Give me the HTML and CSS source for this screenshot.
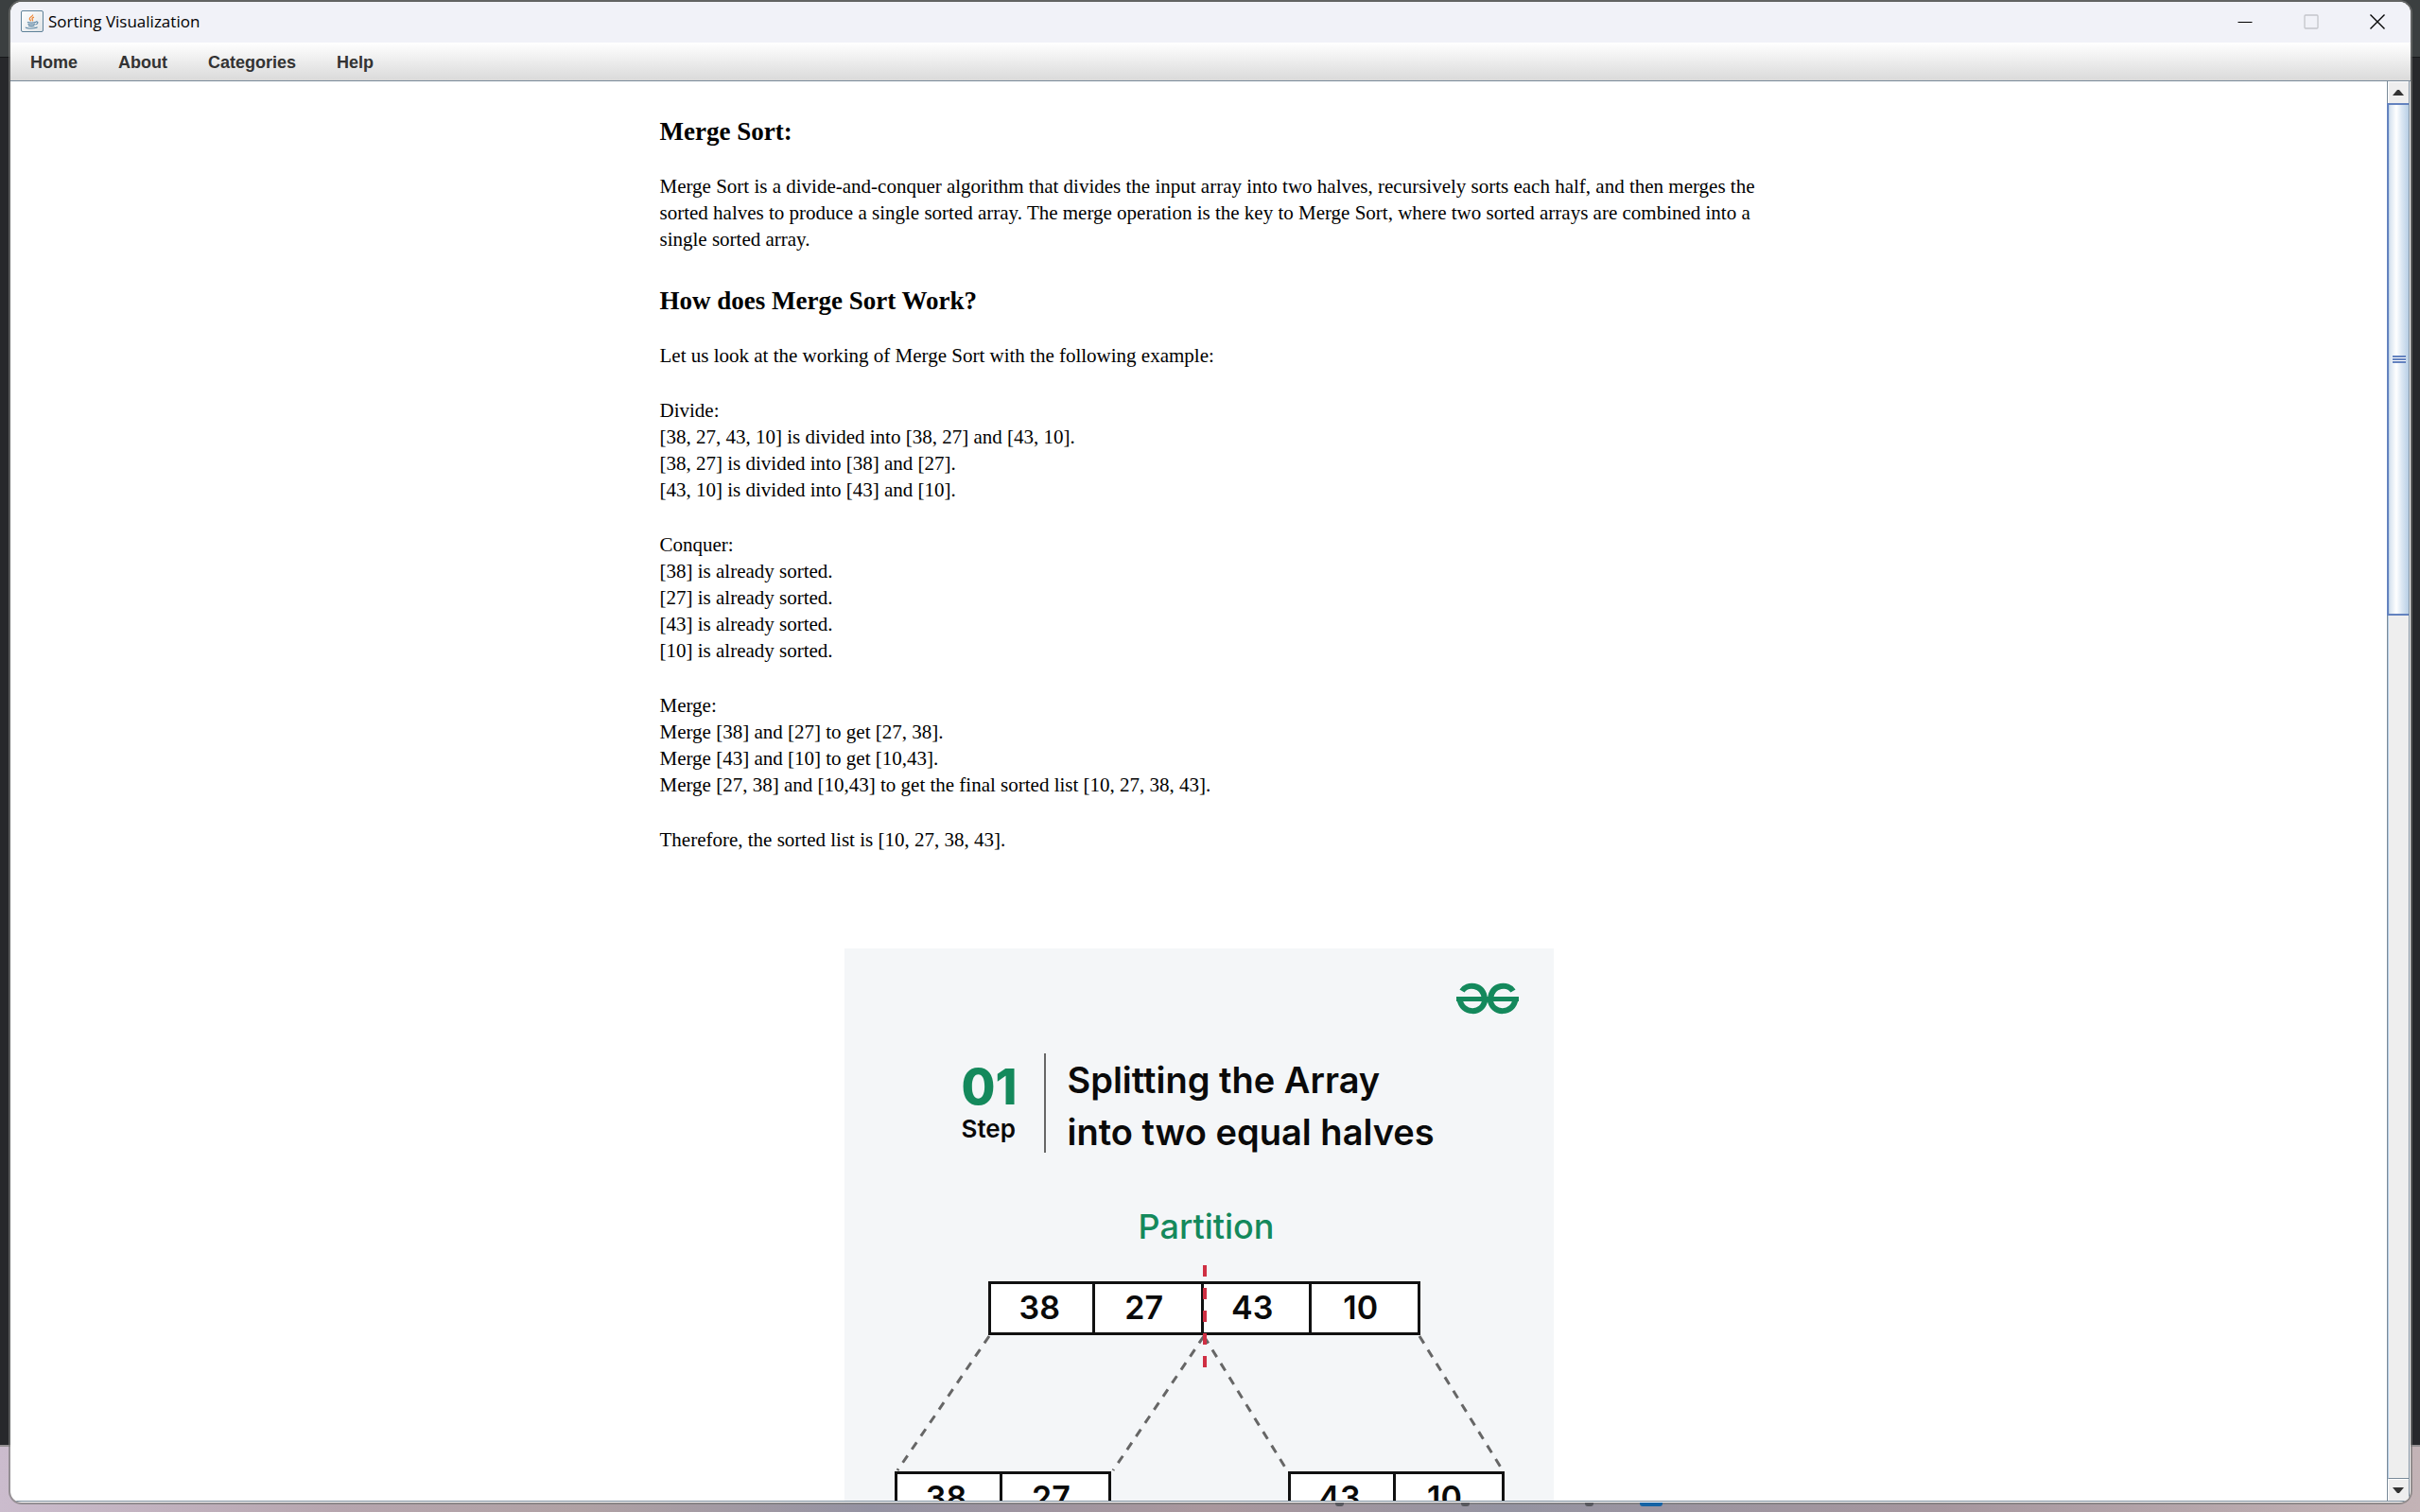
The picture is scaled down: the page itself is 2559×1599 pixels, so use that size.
FILE: index.html
```html
<!DOCTYPE html>
<html lang="en">
<head>
<meta charset="utf-8">
<meta name="viewport" content="width=device-width, initial-scale=1">
<title>Sorting Visualization</title>
<link rel="stylesheet" href="styles.css">
</head>
<body>
<div class="window">
  <header class="titlebar">
    <svg class="app-icon" viewBox="0 0 24 24" aria-hidden="true">
      <defs><linearGradient id="tile" x1="0" y1="0" x2="1" y2="1"><stop offset="0" stop-color="#fff"/><stop offset="1" stop-color="#dfe3e6"/></linearGradient></defs>
      <rect x="0.5" y="0.5" width="23" height="22" rx="1.5" fill="url(#tile)" stroke="#5f8299"/>
      <path d="M12.600 4.500c.5 2-3.800 2.600-3.300 4.500 .2.900 1 1.300 1.500 2.300M14 7.200c-2 .6-2.500 1.600-1.600 2.500.4.600.1 1.200-.3 1.600" fill="none" stroke="#ee8a3c" stroke-width="1.300"/>
      <path d="M7 12.300c1 .9 7.500.8 9 0M7.500 14.200c1.500.8 6 .8 7.500 0M8 16c1.500.8 5 .8 6.500 0M5 17.700c1 1.700 11 1.700 12.500 0M16 12c2.800-.6 2.500 2.200-.5 3" fill="none" stroke="#54809f" stroke-width="1.100"/>
    </svg>
    <h1 class="window-title">Sorting Visualization</h1>
    <div class="window-controls">
      <button class="control" type="button" aria-label="Minimize"><svg viewBox="0 0 16 16"><path d="M0.500 8.500H15.500" stroke="#000"/></svg></button>
      <button class="control" type="button" aria-label="Maximize" disabled><svg viewBox="0 0 16 16"><rect x="1" y="1" width="14" height="14" rx="1" fill="none" stroke="#c4c5ca" stroke-width="1.300"/></svg></button>
      <button class="control" type="button" aria-label="Close"><svg viewBox="0 0 16 16"><path d="M0.500 0.500l15 15M15.500 0.500l-15 15" stroke="#000" stroke-width="1.400"/></svg></button>
    </div>
  </header>
  <nav class="menubar">
    <button class="menu" type="button">Home</button>
    <button class="menu" type="button">About</button>
    <button class="menu" type="button">Categories</button>
    <button class="menu" type="button">Help</button>
  </nav>
  <div class="viewport">
    <main class="page">
      <article class="article">
        <h2>Merge Sort:</h2>
        <p>Merge Sort is a divide-and-conquer algorithm that divides the input array into two halves, recursively sorts each half, and then merges the sorted halves to produce a single sorted array. The merge operation is the key to Merge Sort, where two sorted arrays are combined into a single sorted array.</p>
        <h2>How does Merge Sort Work?</h2>
        <p>Let us look at the working of Merge Sort with the following example:</p>
        <p>Divide:<br>[38, 27, 43, 10] is divided into [38, 27] and [43, 10].<br>[38, 27] is divided into [38] and [27].<br>[43, 10] is divided into [43] and [10].</p>
        <p>Conquer:<br>[38] is already sorted.<br>[27] is already sorted.<br>[43] is already sorted.<br>[10] is already sorted.</p>
        <p>Merge:<br>Merge [38] and [27] to get [27, 38].<br>Merge [43] and [10] to get [10,43].<br>Merge [27, 38] and [10,43] to get the final sorted list [10, 27, 38, 43].</p>
        <p>Therefore, the sorted list is [10, 27, 38, 43].</p>
      </article>
      <figure class="figure">
        <svg class="logo" viewBox="0 0 66 34" role="img" aria-label="GeeksforGeeks">
          <g fill="none" stroke="#14895c" stroke-width="6">
            <path d="M6 9C11 1 28 1 30 17M3.500 17C5 34 29 35 30.500 17"/>
            <path d="M60 9C55 1 38 1 36 17M62.500 17C61 34 37 35 35.500 17"/>
            <path d="M0 17.500H66" stroke-width="5"/>
          </g>
        </svg>
        <div class="step">
          <div class="step-number"><strong>01</strong><span>Step</span></div>
          <h3 class="step-title">Splitting the Array<br>into two equal halves</h3>
        </div>
        <p class="partition">Partition</p>
        <div class="array"><span>38</span><span>27</span><span>43</span><span>10</span></div>
        <svg class="links" viewBox="0 0 640 144" aria-hidden="true">
          <path d="M99 1L2 143M326 1L230 143M326 1L414 143M554 1L642 143" fill="none" stroke="#666" stroke-width="3" stroke-dasharray="9 8"/>
        </svg>
        <div class="halves">
          <div class="array half"><span>38</span><span>27</span></div>
          <div class="array half"><span>43</span><span>10</span></div>
        </div>
        <svg class="split" viewBox="0 0 4 108" aria-hidden="true"><path d="M2 0V108" stroke="#cf2f43" stroke-width="4" stroke-dasharray="12"/></svg>
      </figure>
    </main>
    <div class="scrollbar">
      <button class="arrow" type="button" aria-label="Scroll up"><svg viewBox="0 0 12 6"><path d="M0 6L5 0H7L12 6Z" fill="#333"/></svg></button>
      <div class="track"><div class="thumb"><span class="grip"></span></div></div>
      <button class="arrow" type="button" aria-label="Scroll down"><svg viewBox="0 0 12 6"><path d="M0 0L5 6H7L12 0Z" fill="#333"/></svg></button>
    </div>
  </div>
</div>
<div class="taskbar" aria-hidden="true"><i class="dot"></i><i class="dot"></i><i class="dot"></i><i class="active-app"></i></div>
</body>
</html>
```
FILE: styles.css
```css
* { box-sizing: border-box; }

body {
  margin: 0;
  height: 100vh;
  overflow: hidden;
  display: flex;
  padding: 2px 10px 10px 11px;
  position: relative;
  background:
    linear-gradient(#3b3f40 0 60px, #17181a 60px 61px, #27282b 61px 1528px, #949091 1528px 1530px, transparent 1530px) 0 0 / 100% 100%,
    linear-gradient(90deg, #cbbccd, #b6a5ae 14%, #b0a1a4 24%, #9492a2 36%, #aa979d 50%, #9493a1 62%, #a6969e 80%, #c3b3b6);
}

button { font: inherit; border: 0; padding: 0; background: none; }

.window {
  flex: 1;
  min-width: 0;
  display: flex;
  flex-direction: column;
  overflow: hidden;
  border-radius: 12px;
  background: #fff;
  box-shadow: 0 0 0 2px rgba(120, 120, 118, 0.65);
  position: relative;
  z-index: 1;
}

.titlebar {
  flex: none;
  height: 43px;
  display: flex;
  align-items: center;
  padding: 0 0 2px 11px;
  background: #f1f2f8;
}

.app-icon { width: 24px; height: 24px; }

.window-title {
  margin: 0 0 0 5px;
  font: 400 17px/24px "Open Sans", "Noto Sans", sans-serif;
  color: #000;
}

.window-controls { margin-left: auto; display: flex; }
.control { width: 70px; height: 40px; display: grid; place-items: center; }
.control svg { width: 16px; height: 16px; }

.menubar {
  flex: none;
  display: flex;
  gap: 1px;
  height: 41px;
  border-bottom: 1px solid #7a8a99;
  background: linear-gradient(#fff, #dadada);
}

.menu {
  padding: 2px 21px 0;
  font: 700 18px/38px "Liberation Sans", Arial, sans-serif;
  color: #333;
}

.viewport {
  flex: 1;
  min-height: 0;
  display: flex;
  margin: 0 1px 1px 0;
  border-bottom: 1px solid #7a8a99;
}

.page { flex: 1; min-width: 0; overflow: hidden; }

.article {
  max-width: 1140px;
  margin: 0 auto;
  padding-top: 37px;
  font: 21px/28px "Liberation Serif", "Times New Roman", serif;
  color: #000;
}

.article h2 { margin: 0 0 28px; font-size: 27px; line-height: 32px; }
.article p { margin: 0 -24px 30px 0; }
.article p + h2 { margin-top: 35px; }

.figure {
  position: relative;
  width: 750px;
  height: 750px;
  margin: 101px auto 0;
  padding-top: 36px;
  background: #f4f6f8;
  font-family: Inter, "Open Sans", sans-serif;
  color: #0a0a0a;
}

.logo { display: block; width: 66px; height: 34px; margin: 0 37px 0 auto; }

.step { display: flex; margin: 41px 0 0 124px; height: 105px; }
.step-number {
  width: 89px;
  padding-top: 6px;
  border-right: 2px solid #666;
  font-weight: 600;
  font-size: 26px;
  line-height: 28px;
}
.step-number strong { display: block; font-size: 52px; line-height: 60px; font-weight: 800; color: #14895c; }
.step-title { margin: 1px 0 0 23px; font-size: 38px; line-height: 55px; font-weight: 600; }

.partition { margin: 54px 0 0; padding-left: 16px; text-align: center; font-size: 36px; line-height: 48px; font-weight: 500; color: #14895c; }

.array { display: flex; width: 457px; border: 3px solid #111; background: #fff; }
.array span {
  flex: 1;
  height: 51px;
  padding-right: 4px;
  font-size: 34px;
  line-height: 50px;
  font-weight: 600;
  text-align: center;
}
.array span + span { padding-right: 8px; border-left: 3px solid #111; }
.half { width: 229px; }

.figure > .array { margin: 34px 0 0 152px; }
.links { display: block; width: 640px; height: 144px; margin-left: 54px; overflow: visible; }
.halves { display: flex; gap: 187px; margin-left: 53px; }

.split { position: absolute; left: 379px; top: 335px; width: 4px; height: 108px; }

.scrollbar {
  flex: none;
  width: 24px;
  display: flex;
  flex-direction: column;
  border-left: 1px solid #7a8a99;
  border-right: 1px solid #7a8a99;
  background: #eee;
}
.arrow { height: 23px; display: grid; place-items: center; padding-right: 2px; border-left: 1px solid #fff; border-top: 1px solid #fff; background: #eee; }
.arrow svg { width: 12px; height: 6px; }
.track { flex: 1; border-left: 1px solid #b8cfe5; border-bottom: 1px solid #7a8a99; }
.thumb {
  height: 542px;
  margin-left: -2px;
  display: grid;
  place-items: center;
  border: 2px solid #6382bf;
  border-right: 0;
  background: linear-gradient(90deg, #b8cfe5, #dbe6f1 8%, #fff 38%, #dbe7f3 65%, #b8cfe5);
}
.grip { width: 14px; height: 8px; background: repeating-linear-gradient(#6382bf 0 2px, #fff 2px 3px); }

.taskbar {
  position: absolute;
  left: 0;
  right: 0;
  bottom: 6px;
  height: 4px;
  z-index: 2;
}
.taskbar i { position: absolute; top: 0; width: 9px; height: 4px; border-radius: 0 0 3px 3px; background: #58595f; }
.taskbar .dot:nth-child(1) { left: 1412px; }
.taskbar .dot:nth-child(2) { left: 1545px; }
.taskbar .dot:nth-child(3) { left: 1676px; }
.taskbar .active-app { left: 1734px; width: 24px; background: #1563a5; }
```
